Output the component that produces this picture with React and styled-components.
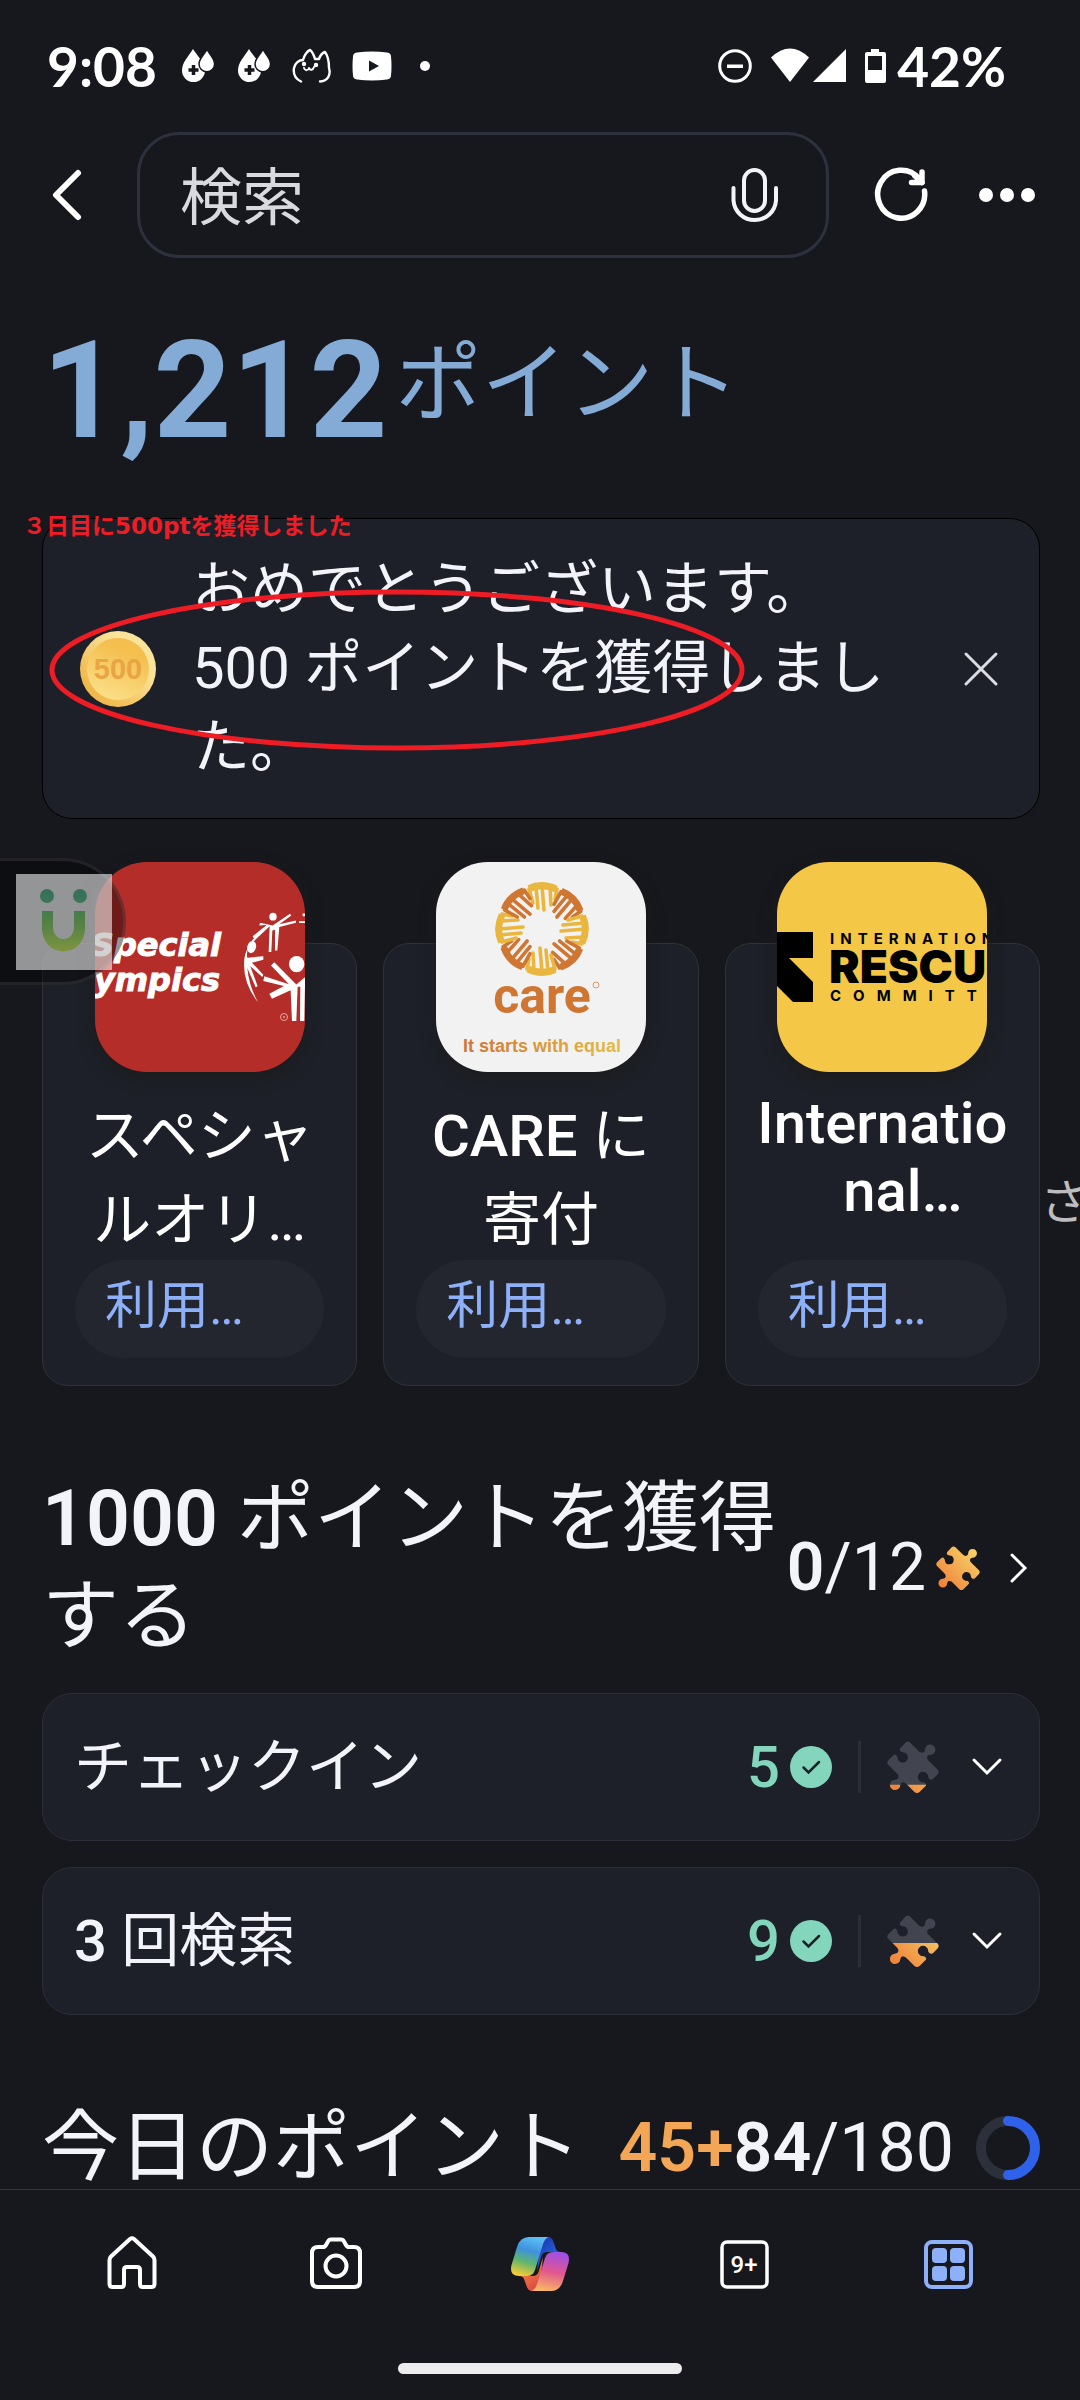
import React, { useId } from "react";
import styled, { createGlobalStyle } from "styled-components";

const colors = {
  page: "#17181d",
  card: "#1d2028",
  line: "#2c2f3a",
  text: "#f3f4f9",
  blue: "#84abd6",
  link: "#8eb0f8",
  mint: "#83d6bb",
  orange: "#f3a655",
  red: "#ee1c25",
};

const nav = [
  { name: "ホーム", icon: <HomeIcon /> },
  { name: "カメラ", icon: <CameraIcon /> },
  { name: "Copilot", icon: <CopilotIcon /> },
  { name: "タブ", icon: <TabsIcon /> },
  { name: "アプリ", icon: <AppsIcon /> },
];

const tasks = [
  { name: "チェックイン", points: 5, filled: 16 },
  { num: "3", name: " 回検索", points: 9, filled: 46 },
];

function App() {
  return (
    <Screen>
      <GlobalStyle />
      <StatusBar>
        <StatusText>9:08</StatusText>
        <StatusIcons>
          <DropsIcon />
          <DropsIcon />
          <CatIcon />
          <VideoIcon />
          <StatusDot />
        </StatusIcons>
        <SystemIcons>
          <SystemIconsDrawing />
          <StatusText>42%</StatusText>
        </SystemIcons>
      </StatusBar>

      <Toolbar>
        <IconButton aria-label="戻る">
          <svg width="34" height="56" viewBox="0 0 34 56" fill="none">
            <path d="M28 6L6 28l22 22" stroke="#fff" strokeWidth="6" strokeLinecap="round" strokeLinejoin="round" />
          </svg>
        </IconButton>
        <SearchBox>
          <input type="text" aria-label="検索" placeholder="検索" />
          <IconButton aria-label="音声検索">
            <MicIcon />
          </IconButton>
        </SearchBox>
        <IconButton aria-label="更新">
          <RefreshIcon />
        </IconButton>
        <IconButton aria-label="その他">
          <svg width="58" height="16" viewBox="0 0 58 16" fill="#fff">
            <circle cx="8" cy="8" r="7" />
            <circle cx="29" cy="8" r="7" />
            <circle cx="50" cy="8" r="7" />
          </svg>
        </IconButton>
      </Toolbar>

      <Points>
        <strong>1,212</strong>
        <span>ポイント</span>
      </Points>

      <Notice>
        <Coin />
        <p>おめでとうございます。500 ポイントを獲得しました。</p>
        <IconButton aria-label="閉じる">
          <svg width="36" height="36" viewBox="0 0 36 36">
            <path d="M3 3l30 30M33 3L3 33" stroke="#dcdde2" strokeWidth="3" strokeLinecap="round" />
          </svg>
        </IconButton>
        <Memo>３日目に500ptを獲得しました</Memo>
        <Circled viewBox="0 0 696 162" fill="none">
          <ellipse cx="348" cy="81" rx="345" ry="78" stroke={colors.red} strokeWidth="5" />
        </Circled>
      </Notice>

      <Rewards>
        <Cards>
          <Card>
            <Tile color="#b42d29">
              <OlympicsLogo />
            </Tile>
            <h3>スペシャルオリ…</h3>
            <UseButton>利用…</UseButton>
          </Card>
          <Card>
            <Tile color="#f2f2f2">
              <CareLogo />
            </Tile>
            <h3>
              <Latin>CARE</Latin> に寄付
            </h3>
            <UseButton>利用…</UseButton>
          </Card>
          <Card>
            <Tile color="#f4c846">
              <RescueLogo />
            </Tile>
            <h3>
              <Latin>
                International<Hang>…</Hang>
              </Latin>
            </h3>
            <UseButton>利用…</UseButton>
          </Card>
        </Cards>
        <More href="#more">さ</More>
        <Floating aria-label="アシスト">
          <SmileLogo />
        </Floating>
      </Rewards>

      <Heading>
        <h2>
          <b>1000</b> ポイントを獲得する
        </h2>
        <Count size={66}>
          <b>0</b>/12
        </Count>
        <Puzzle size={44} filled={100} />
        <NextLink href="#set" aria-label="詳細">
          <svg width="18" height="32" viewBox="0 0 18 32" fill="none">
            <path d="M2 3l13 13L2 29" stroke="#fff" strokeWidth="3" strokeLinecap="round" />
          </svg>
        </NextLink>
      </Heading>

      <Tasks>
        {tasks.map((task) => (
          <Task key={task.name}>
            <TaskName>
              {task.num && <Latin>{task.num}</Latin>}
              {task.name}
            </TaskName>
            <Earned>{task.points}</Earned>
            <CheckIcon />
            <Divider />
            <Puzzle size={52} filled={task.filled} />
            <IconButton aria-label="開く">
              <svg width="32" height="20" viewBox="0 0 32 20" fill="none">
                <path d="M3 3l13 13L29 3" stroke="#fff" strokeWidth="3" strokeLinecap="round" />
              </svg>
            </IconButton>
          </Task>
        ))}
      </Tasks>

      <Today>
        <h2>今日のポイント</h2>
        <Count size={68}>
          <Bonus>45+</Bonus>
          <b>84</b>/180
        </Count>
        <svg width="64" height="64" viewBox="0 0 64 64" fill="none" strokeWidth="10">
          <circle cx="32" cy="32" r="27" stroke="#2c303b" />
          <path d="M32 5a27 27 0 0 1 0 54" stroke="#2e62ea" strokeLinecap="round" />
        </svg>
      </Today>

      <BottomNav>
        <ul>
          {nav.map((item) => (
            <li key={item.name}>
              <a href="#tab" aria-label={item.name}>
                {item.icon}
              </a>
            </li>
          ))}
        </ul>
        <HomeBar />
      </BottomNav>
    </Screen>
  );
}

function DropsIcon() {
  return (
    <svg width="36" height="36" viewBox="0 0 36 36">
      <path d="M13 1C9 8 2 14 2 22.500a11.500 11.500 0 0 0 23 0C25 14 17 8 13 1z" fill="#fff" />
      <path d="M27 1.500c-3 5.500-8 9-8 14.500a7.800 7.800 0 0 0 15.600 0c0-5.500-4.600-9-7.600-14.500z" fill="#fff" stroke={colors.page} strokeWidth="1.500" />
      <path d="M13.500 17v10M8.500 22h10" stroke={colors.page} strokeWidth="3.500" />
    </svg>
  );
}

function CatIcon() {
  return (
    <svg width="40" height="36" viewBox="0 0 40 36" fill="none" stroke="#fff" strokeWidth="2.400" strokeLinecap="round" strokeLinejoin="round">
      <path d="M9 33.500C4 31 1 26 2 20c1-5 5-8 9-8 1-4 4-9 7-10 3 2 4 6 5 9h4c1-3 3-6 6-7 3 4 4 10 4 16 2 7-1 13-9 13.500" />
      <path d="M12 20c1 3 4 3 5 0 1 3 4 2 5-1" strokeWidth="2" />
      <circle cx="12" cy="16" r="1" />
      <circle cx="24" cy="17" r="1" />
    </svg>
  );
}

function VideoIcon() {
  return (
    <svg width="40" height="30" viewBox="0 0 40 30">
      <path d="M5 1.500q15-2 30 0 4 .5 4 4 1 9.500 0 19 0 3.500-4 4-15 2-30 0-4-.5-4-4-1-9.500 0-19 0-3.500 4-4z" fill="#fff" />
      <path d="M17 9.500v11l10-5.500z" fill={colors.page} />
    </svg>
  );
}

function SystemIconsDrawing() {
  return (
    <svg width="170" height="36" viewBox="0 0 170 36" fill="#fff">
      <circle cx="18" cy="18" r="15.300" fill="none" stroke="#fff" strokeWidth="3" />
      <path d="M10 16.500h16v3.500H10z" />
      <path d="M54 9.500q19-18 38 0L73 34z" />
      <path d="M96 34L129 1v33z" />
      <path d="M154 1h8v3h5q2 0 2 2v27q0 2-2 2h-17q-2 0-2-2V6q0-2 2-2h4zM151 8v14h14V8z" fillRule="evenodd" />
    </svg>
  );
}

function MicIcon() {
  return (
    <svg width="50" height="58" viewBox="0 0 50 58" fill="none" stroke="#f3f4f9" strokeWidth="4" strokeLinecap="round">
      <rect x="14" y="4" width="21" height="41" rx="10.500" />
      <path d="M3.500 22v12.500a21.300 21 0 0 0 42.500 0V22" />
    </svg>
  );
}

function RefreshIcon() {
  return (
    <svg width="56" height="56" viewBox="0 0 56 56" fill="none" stroke="#fff" strokeWidth="5.500" strokeLinecap="round">
      <path d="M50.500 24A23.500 24 0 1 1 45 11.500" />
      <path d="M48 5v10.500H37.500" strokeLinejoin="round" />
      <path d="M41 9l7 6.500" />
    </svg>
  );
}

function Coin() {
  return (
    <svg width="76" height="76" viewBox="0 0 76 76">
      <defs>
        <linearGradient id="rim" x1="1" y1="0" x2="0" y2="1">
          <stop offset=".3" stopColor="#fae39a" />
          <stop offset=".8" stopColor="#f1b94c" />
        </linearGradient>
        <linearGradient id="face" x1=".7" y1="0" x2=".3" y2="1">
          <stop offset=".2" stopColor="#f4bf4e" />
          <stop offset="1" stopColor="#fbe08a" />
        </linearGradient>
      </defs>
      <circle cx="38" cy="38" r="38" fill="url(#rim)" />
      <circle cx="38" cy="38" r="31" fill="url(#face)" />
      <text x="38" y="48" textAnchor="middle" fontFamily="Liberation Sans, sans-serif" fontWeight="700" fontSize="29" fill="#e9a444">
        500
      </text>
    </svg>
  );
}

function OlympicsLogo() {
  return (
    <svg width="210" height="210" viewBox="0 0 210 210">
      <g
        fill="#fff"
        stroke="#fff"
        strokeWidth="1"
        fontFamily="DejaVu Sans, sans-serif"
        fontWeight="700"
        fontStyle="italic"
        fontSize="32"
        textAnchor="end"
      >
        <text x="126" y="94">Special</text>
        <text x="125" y="129">Olympics</text>
      </g>
      <g transform="scale(.3333 .3571) translate(-285 -62)" fill="#fff">
        <circle cx="819" cy="215" r="11" />
        <ellipse cx="755" cy="300" rx="13" ry="17" transform="rotate(20 755 300)" />
        <circle cx="890" cy="348" r="23" />
        <path d="M780 232l38 8 52-33 4 5-36 24 50-10v6l-50 12-6 66h-7v-58l-8 2-3 60h-8l3-72-50 44-3-5 48-43-26 2z" />
        <path d="M897 228h18v5h-18zM908 206h8v8h-8z" />
        <path d="M758 270l45-34 3 5-43 36z" />
        <path d="M742 330l48-4v10l-34 8 34 34-3 6-36-30 22 56-6 3-25-54q5 50 32 96-42-50-42-106 0-32 16-54-10 20-6 35z" />
        <path d="M793 382l74 22-54-52 10-9 66 62 26-20v24l-2 98h-13l1-96h-8l-4 96h-13l-4-86-56 24-8-14 44-22-62-14z" />
      </g>
      <circle cx="189" cy="155" r="3.500" fill="none" stroke="#e3a6a3" />
      <circle cx="189" cy="155" r="1" fill="#e3a6a3" />
    </svg>
  );
}

function CareLogo() {
  return (
    <svg width="210" height="210" viewBox="0 0 210 210">
      <defs>
        <linearGradient id="slogan" x1="0" x2="1">
          <stop offset="0" stopColor="#cf7433" />
          <stop offset="1" stopColor="#e3bd45" />
        </linearGradient>
      </defs>
      {[0, 1, 2, 3, 4, 5, 6, 7].map((hand) => {
        const color = hand % 2 ? "#cf7632" : "#e9b73f";
        return (
          <g key={hand} transform={`translate(106 67) rotate(${hand * 45})`} stroke={color} fill="none">
            <path d="M-13-40.500Q0-46.500 14-40" strokeWidth="7" />
            <path d="M-13-40l4 14M-6-42l2 21M0-43l2 24M8-42l1 18M15-40l-2 10" strokeWidth="3.600" strokeLinecap="round" />
          </g>
        );
      })}
      <text x="106" y="151" fontSize="50" fontWeight="700" fontFamily="Roboto, sans-serif" textAnchor="middle" fill="#cf7632">
        care
      </text>
      <circle cx="160" cy="123" r="3" fill="none" stroke="#dc9a69" />
      <text x="106" y="190" fontSize="18" fontWeight="700" fontFamily="Liberation Sans, sans-serif" textAnchor="middle" fill="url(#slogan)">
        It starts with equal
      </text>
    </svg>
  );
}

function RescueLogo() {
  return (
    <svg width="210" height="210" viewBox="0 0 210 210" fontFamily="Inter, sans-serif">
      <path d="M0 70h36v26H12l24 24v20H16L0 124z" />
      <text x="53" y="82" fontSize="15" fontWeight="700" letterSpacing="6">INTERNATION</text>
      <text x="52" y="121" fontSize="46" fontWeight="900">RESCU</text>
      <text x="53" y="139" fontSize="15" fontWeight="700" letterSpacing="12">COMMITT</text>
    </svg>
  );
}

function SmileLogo() {
  return (
    <svg width="96" height="96" viewBox="0 0 96 96">
      <defs>
        <linearGradient id="smile" gradientUnits="userSpaceOnUse" x1="0" y1="18" x2="0" y2="78">
          <stop offset="0" stopColor="#34705a" />
          <stop offset=".5" stopColor="#528046" />
          <stop offset="1" stopColor="#7f953e" />
        </linearGradient>
      </defs>
      <g fill="url(#smile)">
        <circle cx="31" cy="22" r="7" />
        <circle cx="64" cy="22" r="7" />
        <path d="M26 37h11v17a10.500 11 0 0 0 21 0V37h11v18a21.500 22.500 0 0 1-43 0z" />
      </g>
    </svg>
  );
}

const piece =
  "M13 7.500L18.500 1.500Q20.500-.5 23 1.500L30.500 9Q33.500 12.500 36 11.500 38.300 10.800 38 8.500A5.200 5.200 0 1 1 43 13.800Q40.300 14 40 16.500 40 18.500 43 21L50.500 28.500Q52.800 31 50.500 33.500L46 38Q44.500 39.500 42.500 38 41 37 41.200 35.500A5.200 5.200 0 1 0 36.500 41.200Q38.200 41.500 39 43 39.500 44.500 38 45.500L32.500 51Q30 53 27.500 51L20.500 44Q17.500 40.500 15 41.500 13.500 42 13.300 44A5.200 5.200 0 1 1 8 38.700Q11 38.500 11.500 36 11.700 34 9.500 32L1.500 24Q-1 21.500 1.500 19L6 14.500Q8 12.500 9.500 14.500 10.500 16 10.500 17A5.200 5.200 0 1 0 16 11.200Q13.500 11 12.800 9.500z";

// filled: share of the piece in percent, from the bottom
function Puzzle({ size, filled }) {
  const id = useId();
  const top = 52 - (52 * filled) / 100;

  return (
    <svg width={size} height={size} viewBox="0 0 52 52">
      <defs>
        <linearGradient id={id + "g"} gradientUnits="userSpaceOnUse" x1="4" y1="48" x2="44" y2="8">
          <stop offset="0" stopColor="#ef8039" />
          <stop offset="1" stopColor="#f6cd66" />
        </linearGradient>
        <clipPath id={id + "c"}>
          <rect x="0" y={top} width="52" height="52" />
        </clipPath>
      </defs>
      {filled < 100 && <path d={piece} fill="#42454f" />}
      <path d={piece} fill={`url(#${id}g)`} clipPath={`url(#${id}c)`} />
    </svg>
  );
}

function CheckIcon() {
  return (
    <svg width="42" height="42" viewBox="0 0 42 42" fill="none">
      <circle cx="21" cy="21" r="21" fill={colors.mint} />
      <path d="M13.500 21.500l5 5 10.500-10.500" stroke={colors.card} strokeWidth="2.500" strokeLinecap="round" />
    </svg>
  );
}

function HomeIcon() {
  return (
    <svg width="56" height="56" viewBox="0 0 56 56" fill="none" stroke="#fff" strokeWidth="4" strokeLinejoin="round">
      <path d="M5.500 24q0-2 1.500-3.500L26 3q2-1.500 4 0l19 17.500q1.500 1.500 1.500 3.500v24q0 3-3 3h-9q-2.500 0-2.500-3V34q0-3-3-3h-10q-3 0-3 3v14q0 3-2.500 3h-9q-3 0-3-3z" />
    </svg>
  );
}

function CameraIcon() {
  return (
    <svg width="56" height="56" viewBox="0 0 56 56" fill="none" stroke="#fff" strokeWidth="4" strokeLinejoin="round">
      <path d="M10 11h5q2 0 3-2l2-3.500q1-2 3-2h10q2 0 3 2L38 9q1 2 3 2h5q6 0 6 6v28q0 6-6 6H10q-6 0-6-6V17q0-6 6-6z" />
      <circle cx="28" cy="30" r="10.500" />
    </svg>
  );
}

function CopilotIcon() {
  return (
    <svg width="58" height="54" viewBox="0 0 58 54">
      <defs>
        <linearGradient id="cool" x1=".6" y1="0" x2=".3" y2="1">
          <stop offset="0" stopColor="#5cc0f5" />
          <stop offset=".35" stopColor="#3f92dc" />
          <stop offset=".65" stopColor="#5fb56f" />
          <stop offset="1" stopColor="#f6cc34" />
        </linearGradient>
        <linearGradient id="warm" x1=".6" y1="0" x2=".4" y2="1">
          <stop offset="0" stopColor="#9f50e5" />
          <stop offset=".5" stopColor="#e2568f" />
          <stop offset="1" stopColor="#f9b763" />
        </linearGradient>
        <linearGradient id="navy" x1="0" y1="0" x2=".6" y2="1">
          <stop offset="0" stopColor="#1b2fae" />
          <stop offset="1" stopColor="#2a73e0" />
        </linearGradient>
        <linearGradient id="ember" x1="0" y1="0" x2=".5" y2="1">
          <stop offset="0" stopColor="#f79a4c" />
          <stop offset="1" stopColor="#df4b41" />
        </linearGradient>
      </defs>
      <path d="M28 16L33 3Q34 0 37 0q4 0 5.500 5L45 12q1 3 5 3H36q-4 0-5.500 4L26 34z" fill="url(#navy)" />
      <path d="M30 38L25 51q-1 3-4 3-4 0-5.500-5L13 42q-1-3-5-3h14q4 0 5.500-4L32 20z" fill="url(#ember)" />
      <path d="M18 0h20q-4 1-6 7l-8 26q-2 6-8 6H8Q-2 39 .5 28L6 10Q9 0 18 0z" fill="url(#cool)" />
      <path d="M40 54H20q4-1 6-7l8-26q2-6 8-6h8q10 0 7.500 11L52 44q-3 10-12 10z" fill="url(#warm)" />
    </svg>
  );
}

function TabsIcon() {
  return (
    <svg width="56" height="56" viewBox="0 0 56 56">
      <rect x="6" y="6" width="45" height="45" rx="5" fill="none" stroke="#fff" strokeWidth="3.500" />
      <text x="28" y="37" textAnchor="middle" fontFamily="Roboto, sans-serif" fontWeight="500" fontSize="24" fill="#fff">
        9+
      </text>
    </svg>
  );
}

function AppsIcon() {
  return (
    <svg width="56" height="56" viewBox="0 0 56 56" fill={colors.link}>
      <rect x="6" y="6" width="45" height="45" rx="6" fill="none" stroke={colors.link} strokeWidth="4" />
      <rect x="12" y="12" width="15" height="15" rx="4" />
      <rect x="30" y="12" width="15" height="15" rx="4" />
      <rect x="12" y="30" width="15" height="15" rx="4" />
      <rect x="30" y="30" width="15" height="15" rx="4" />
    </svg>
  );
}

const GlobalStyle = createGlobalStyle`
  * {
    box-sizing: border-box;
  }

  body {
    margin: 0;
    background-color: ${colors.page};
    color: ${colors.text};
    font-family: Roboto, "Noto Sans CJK JP", sans-serif;
  }

  h2, h3, p, ul {
    margin: 0;
    padding: 0;
    font-weight: 400;
  }

  svg {
    display: block;
    flex: none;
  }
`;

const Screen = styled.div`
  min-height: 100vh;
  display: flex;
  flex-direction: column;
  overflow: hidden;
`;

const IconButton = styled.button`
  flex: none;
  padding: 0;
  border: none;
  background: none;
`;

const StatusBar = styled.div`
  height: 132px;
  padding: 0 74px 0 47px;
  display: flex;
  align-items: center;
`;

const StatusText = styled.span`
  font-family: Lato, sans-serif;
  font-size: 55px;
  line-height: 64px;
  font-weight: 700;
  color: #fff;
`;

const StatusIcons = styled.div`
  margin-left: 23px;
  display: flex;
  align-items: center;
  gap: 20px;
`;

const StatusDot = styled.span`
  width: 10px;
  height: 10px;
  margin-left: 8px;
  border-radius: 50%;
  background-color: #fff;
`;

const SystemIcons = styled.div`
  margin-left: auto;
  display: flex;
  align-items: center;
  gap: 10px;
`;

const Toolbar = styled.div`
  padding: 0 44px 0 50px;
  display: flex;
  align-items: center;
`;

const SearchBox = styled.div`
  flex: 1;
  min-width: 0;
  height: 126px;
  margin: 0 45px 0 53px;
  padding: 0 46px 0 40px;
  display: flex;
  align-items: center;
  border: 3px solid #2d313d;
  border-radius: 42px;

  input {
    flex: 1;
    min-width: 0;
    padding: 8px 0 0;
    border: none;
    outline: none;
    background: none;
    color: ${colors.text};
    font-family: inherit;
    font-size: 62px;
    line-height: 90px;
  }

  input::placeholder {
    color: #d9dadf;
    opacity: 1;
  }

  & + button {
    margin-right: 48px;
  }
`;

const Points = styled.div`
  padding: 53px 42px 47px;
  display: flex;
  align-items: center;
  color: ${colors.blue};

  strong {
    font-size: 136px;
    line-height: 160px;
    font-weight: 700;
  }

  span {
    margin-left: 8px;
    padding-bottom: 12px;
    font-size: 86px;
    line-height: 148px;
  }
`;

const Notice = styled.section`
  position: relative;
  margin: 0 40px 0 42px;
  padding: 31px 40px 31px 37px;
  display: flex;
  align-items: center;
  justify-content: space-between;
  border: 1px solid #000;
  border-radius: 30px;
  background-color: ${colors.card};

  p {
    flex: 1;
    margin: 0 46px 0 36px;
    font-size: 58px;
    line-height: 79px;
  }
`;

const Memo = styled.div`
  position: absolute;
  left: -20px;
  top: -8px;
  color: ${colors.red};
  font-family: "DejaVu Sans", "Noto Sans CJK JP", sans-serif;
  font-size: 23px;
  line-height: 30px;
  font-weight: 700;
  white-space: nowrap;
`;

const Circled = styled.svg`
  position: absolute;
  left: 6px;
  top: 70px;
  width: 696px;
  height: 162px;
`;

const Rewards = styled.section`
  position: relative;
  padding: 43px 0 0 42px;
  display: flex;
`;

const Cards = styled.div`
  flex: 1;
  min-width: 0;
  display: grid;
  grid-template-columns: repeat(3, minmax(0, 1fr));
  gap: 26px;
`;

const Card = styled.article`
  margin-top: 81px;
  padding: 0 32px 27px;
  display: flex;
  flex-direction: column;
  align-items: center;
  border: 1px solid #303238;
  border-radius: 26px;
  background-color: ${colors.card};

  h3 {
    align-self: stretch;
    min-height: 171px;
    margin: 17px -6px 0;
    color: #fff;
    font-size: 58px;
    line-height: normal;
    text-align: center;
    word-break: break-all;
  }
`;

const Tile = styled.div`
  width: 210px;
  height: 210px;
  margin-top: -82px;
  overflow: hidden;
  border-radius: 52px;
  background-color: ${(props) => props.color};
  box-shadow: 0 6px 16px rgba(28, 28, 28, 0.8);
`;

const Latin = styled.span`
  font-weight: 500;
`;

const Hang = styled.span`
  display: inline-block;
  width: 0;
`;

const UseButton = styled.button`
  width: 100%;
  height: 98px;
  padding: 0 30px 4px;
  border: none;
  border-radius: 49px;
  background-color: #23262f;
  color: ${colors.link};
  font-family: inherit;
  font-size: 52px;
  line-height: 74px;
  font-weight: 400;
  text-align: left;
`;

const More = styled.a`
  width: 40px;
  padding-top: 306px;
  overflow: hidden;
  color: #bdbdbf;
  font-size: 48px;
  line-height: 70px;
  text-decoration: none;
`;

const Floating = styled.button`
  position: absolute;
  left: -4px;
  top: 39px;
  width: 130px;
  height: 127px;
  padding: 0 0 0 17px;
  border: 3px solid rgba(120, 120, 125, 0.2);
  border-radius: 0 64px 64px 0;
  background-color: rgba(0, 0, 0, 0.4);

  svg {
    background-color: rgba(255, 255, 255, 0.56);
  }
`;

const Heading = styled.div`
  padding: 84px 52px 27px 42px;
  display: flex;
  align-items: center;

  h2 {
    flex: 1;
    font-size: 77px;
    line-height: 98px;
  }

  b {
    font-weight: 600;
  }

  svg {
    margin-left: 10px;
  }
`;

const Count = styled.div`
  font-size: ${(props) => props.size}px;
  line-height: 82px;
  white-space: nowrap;

  b {
    font-weight: 600;
  }
`;

const Bonus = styled.span`
  font-weight: 600;
  color: ${colors.orange};
`;

const NextLink = styled.a`
  margin-left: 20px;
`;

const Tasks = styled.div`
  padding: 0 40px 0 42px;
  display: flex;
  flex-direction: column;
  gap: 26px;
`;

const Task = styled.div`
  height: 148px;
  padding: 0 36px 0 31px;
  display: flex;
  align-items: center;
  border: 1px solid ${colors.line};
  border-radius: 30px;
  background-color: ${colors.card};

  button {
    margin-left: 32px;
  }
`;

const TaskName = styled.div`
  flex: 1;
  font-size: 58px;
  line-height: 80px;
`;

const Earned = styled.span`
  margin-right: 10px;
  color: ${colors.mint};
  font-size: 58px;
  line-height: 80px;
  font-weight: 500;
`;

const Divider = styled.span`
  width: 3px;
  height: 52px;
  margin: 0 26px;
  background-color: ${colors.line};
`;

const Today = styled.div`
  padding: 92px 40px 0 42px;
  display: flex;
  align-items: center;

  h2 {
    flex: 1;
    font-size: 77px;
    line-height: 82px;
    white-space: nowrap;
  }

  svg {
    margin-left: 22px;
  }
`;

const BottomNav = styled.nav`
  margin-top: auto;
  padding-bottom: 26px;
  border-top: 1px solid #34363c;
  background-color: ${colors.page};

  ul {
    padding: 46px 30px 0;
    display: grid;
    grid-template-columns: repeat(5, 1fr);
    list-style: none;
  }

  a {
    height: 56px;
    display: flex;
    align-items: center;
    justify-content: center;
  }
`;

const HomeBar = styled.div`
  width: 284px;
  height: 11px;
  margin: 71px auto 0;
  border-radius: 6px;
  background-color: #ececec;
`;

export default App;
